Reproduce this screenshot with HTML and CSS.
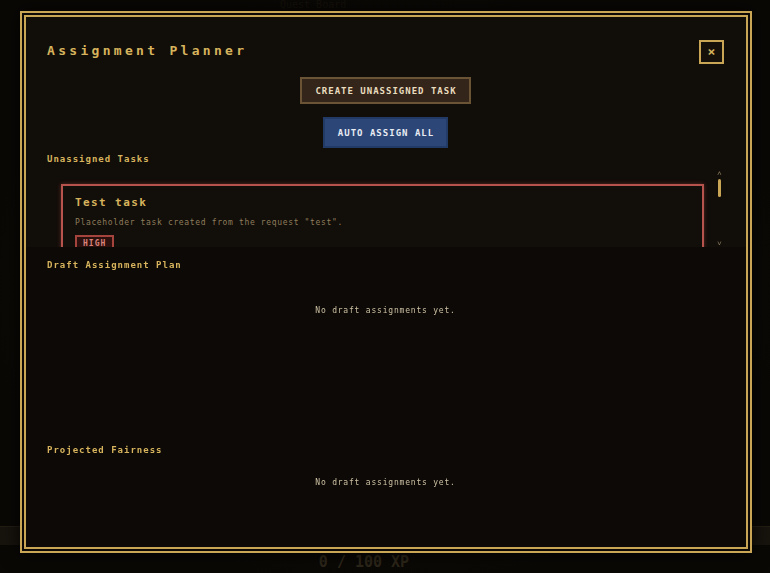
FILE: index.html
```html
<!DOCTYPE html>
<html>
    <head>
        <meta charset="utf-8">
        <link rel="stylesheet" href="styles.css">
    </head>
    <body>
        <div class="page">
            <div class="page-top">Quest Board</div>
            <div class="page-fill"></div>
            <div class="xp-bar"></div>
            <div class="xp-text">0 / 100 XP</div>
        </div>

        <div class="overlay">
            <div class="modal">
                <div class="modal-top">
                    <div class="modal-header">
                        <h1 class="modal-title">Assignment Planner</h1>
                        <button class="close-btn">&times;</button>
                    </div>
                    <div class="actions">
                        <button class="btn btn-create">Create Unassigned Task</button>
                        <button class="btn btn-auto">Auto Assign All</button>
                    </div>
                    <h2 class="section-title first">Unassigned Tasks</h2>
                    <div class="task-scroll">
                        <div class="task-list">
                            <div class="task-card">
                                <div class="task-name">Test task</div>
                                <div class="task-desc">Placeholder task created from the request "test".</div>
                                <span class="badge">HIGH</span>
                            </div>
                        </div>
                        <div class="scrollbar">
                            <span class="arrow">&#708;</span>
                            <span class="thumb"></span>
                            <span class="track"></span>
                            <span class="arrow">&#709;</span>
                        </div>
                    </div>
                </div>

                <div class="modal-body">
                    <h2 class="section-title">Draft Assignment Plan</h2>
                    <div class="empty plan-empty">No draft assignments yet.</div>
                    <h2 class="section-title">Projected Fairness</h2>
                    <div class="empty fair-empty">No draft assignments yet.</div>
                </div>
            </div>
        </div>
    </body>
</html>
```

FILE: styles.css
```css
html, body {
    width: 100%;
    height: 100%;
}

body {
    margin: 0;
    background: #0a0805;
    font-family: "DejaVu Sans Mono", "Liberation Mono", monospace;
    overflow: hidden;
}

/* page behind the modal */
.page {
    height: 100%;
    display: flex;
    flex-direction: column;
    background: radial-gradient(ellipse at center, #15110b 0%, #0a0805 75%);
}

.page-top {
    height: 12px;
    padding-left: 280px;
    font-size: 10px;
    line-height: 10px;
    color: #16120c;
}

.page-fill {
    flex: 1;
}

.xp-bar {
    height: 18px;
    background: #17130d;
    border-top: 1px solid #231d13;
    margin-bottom: 6px;
}

.xp-text {
    height: 22px;
    line-height: 22px;
    padding-right: 42px;
    text-align: center;
    font-size: 15px;
    font-weight: bold;
    color: #2e271a;
}

/* modal */
.overlay {
    position: fixed;
    inset: 0;
    padding: 11px 18px 20px 20px;
}

.modal {
    width: 732px;
    height: 542px;
    box-sizing: border-box;
    border: 6px double #c9a655;
    background: #0c0906;
    display: flex;
    flex-direction: column;
    overflow: hidden;
    box-shadow: 0 0 18px rgba(0, 0, 0, 0.8);
}

.modal-top {
    background: #110d09;
    padding: 23px 22px 0 21px;
}

.modal-header {
    display: flex;
    justify-content: space-between;
    align-items: center;
    height: 24px;
}

.modal-title {
    margin: 0;
    padding-bottom: 3px;
    font-size: 13px;
    letter-spacing: 3.3px;
    font-weight: bold;
    color: #d6b35c;
}

.close-btn {
    width: 25px;
    height: 24px;
    padding: 0;
    background: #15100a;
    border: 2px solid #c9a655;
    color: #d6b35c;
    font-family: inherit;
    font-size: 13px;
    font-weight: bold;
    line-height: 18px;
}

.actions {
    margin-top: 13px;
    display: flex;
    flex-direction: column;
    align-items: center;
    gap: 13px;
}

.btn {
    font-family: inherit;
    font-size: 9px;
    font-weight: bold;
    letter-spacing: 1px;
    text-transform: uppercase;
    padding: 0 12px 0 13px;
}

.btn-create {
    height: 27px;
    background: #33251a;
    border: 2px solid #6b5435;
    color: #eadcbf;
}

.btn-auto {
    height: 31px;
    background: #2b4677;
    border: 2px solid #223a66;
    color: #e8ebf2;
}

.section-title {
    margin: 12px 0 0;
    font-size: 9px;
    line-height: 12px;
    letter-spacing: 1px;
    font-weight: bold;
    color: #d6b35c;
}

.section-title.first {
    margin-top: 5px;
}

/* unassigned list */
.task-scroll {
    margin-top: 5px;
    height: 77px;
    display: flex;
}

.task-list {
    flex: 1;
    overflow: hidden;
    padding: 14px 11px 0 14px;
}

.task-card {
    border: 2px solid #b5534c;
    box-shadow: 0 0 4px rgba(190, 80, 70, 0.45);
    background: #120e09;
    padding: 10px 12px 12px;
}

.task-name {
    font-size: 11px;
    line-height: 14px;
    letter-spacing: 1.4px;
    font-weight: bold;
    color: #d6b35c;
}

.task-desc {
    margin-top: 7px;
    font-size: 8px;
    line-height: 12px;
    letter-spacing: 0.65px;
    color: #8e7d5d;
}

.badge {
    display: inline-block;
    margin-top: 6px;
    padding: 2px 6px;
    border: 2px solid #a5433d;
    background: #2c100e;
    color: #d9837b;
    font-size: 8px;
    line-height: 10px;
    letter-spacing: 1px;
    font-weight: bold;
}

.scrollbar {
    width: 9px;
    display: flex;
    flex-direction: column;
    align-items: center;
    padding-top: 1px;
}

.arrow {
    font-size: 8px;
    line-height: 6px;
    color: #8a7b5e;
}

.thumb {
    width: 3px;
    height: 18px;
    margin-top: 2px;
    border-radius: 2px;
    background: #c9a655;
}

.track {
    flex: 1;
}

/* lower sections */
.modal-body {
    flex: 1;
    padding: 0 22px 0 21px;
}

.empty {
    box-sizing: border-box;
    text-align: center;
    font-size: 8px;
    line-height: 12px;
    letter-spacing: 0.8px;
    color: #cdc1a4;
}

.plan-empty {
    height: 161px;
    padding-top: 34px;
}

.fair-empty {
    padding-top: 21px;
}
```
